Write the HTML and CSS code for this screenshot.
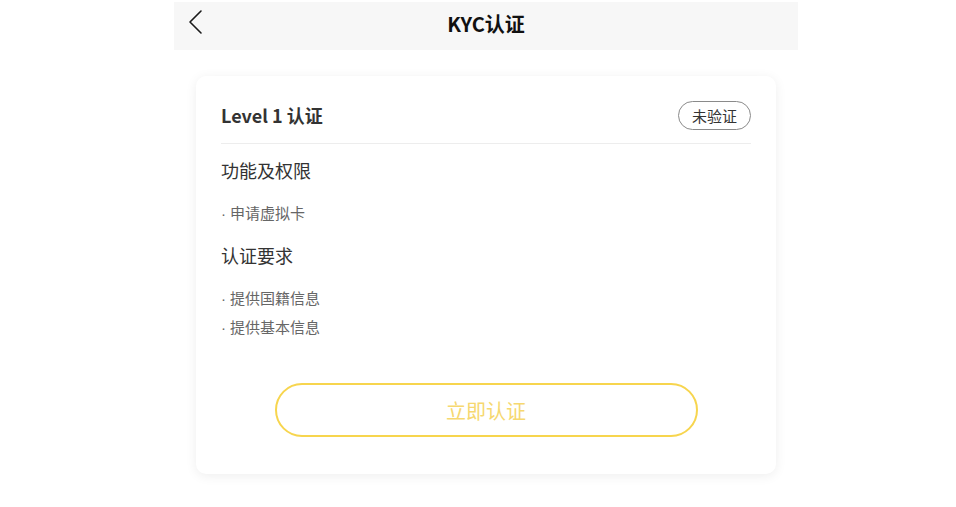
FILE: index.html
```html
<!DOCTYPE html>
<html lang="zh-CN">
<head>
<meta charset="utf-8">
<title>KYC认证</title>
<link rel="stylesheet" href="styles.css">
</head>
<body>
<div class="page">
  <header class="topbar">
    <button class="back" aria-label="返回">
      <svg width="16" height="26" viewBox="0 0 16 26"><polyline points="13,2 2,13 13,24" fill="none" stroke="#1a1a1a" stroke-width="1.6" stroke-linecap="round" stroke-linejoin="round"/></svg>
    </button>
    <h1 class="topbar-title">KYC认证</h1>
  </header>
  <main class="content">
    <section class="card">
      <div class="card-head">
        <h2 class="level">Level 1 认证</h2>
        <span class="badge">未验证</span>
      </div>
      <h3 class="sec sec-first">功能及权限</h3>
      <ul class="items">
        <li><span class="dot">·</span>申请虚拟卡</li>
      </ul>
      <h3 class="sec">认证要求</h3>
      <ul class="items">
        <li><span class="dot">·</span>提供国籍信息</li>
        <li><span class="dot">·</span>提供基本信息</li>
      </ul>
      <div class="actions">
        <button class="verify">立即认证</button>
      </div>
    </section>
  </main>
</div>
</body>
</html>
```

FILE: styles.css
```css
* { box-sizing: border-box; }
html, body { margin: 0; background: #fff; }
body {
  padding: 2px 0 0 16px;
  font-family: "Noto Sans CJK SC", "Noto Sans", sans-serif;
  color: #333;
}
.page { width: 624px; margin: 0 auto; }
.topbar {
  position: relative;
  height: 48px;
  background: #f7f7f7;
  display: flex;
  align-items: center;
  justify-content: center;
}
.back {
  position: absolute;
  left: 14px;
  top: 7px;
  padding: 0;
  border: 0;
  background: none;
  display: flex;
}
.topbar-title {
  margin: 0;
  font-size: 20px;
  font-weight: 700;
  color: #111;
  line-height: 26px;
  margin-top: -5px;
}
.content { padding: 26px 22px 30px; }
.card {
  background: #fff;
  border-radius: 10px;
  box-shadow: 0 2px 12px rgba(0,0,0,0.07);
  padding: 25px 25px 37px;
}
.card-head {
  display: flex;
  align-items: center;
  justify-content: space-between;
  padding-bottom: 13px;
  border-bottom: 1px solid #ededed;
}
.level {
  margin: 0;
  font-size: 18px;
  font-weight: 700;
  line-height: 29px;
  color: #333;
}
.badge {
  height: 29px;
  line-height: 27px;
  padding: 0 13px;
  border: 1px solid #8a8a8a;
  border-radius: 15px;
  font-size: 15px;
  color: #333;
}
.sec {
  margin: 19px 0 0;
  font-size: 18px;
  font-weight: 400;
  line-height: 26px;
  color: #333;
}
.sec-first { margin-top: 13px; }
.items {
  list-style: none;
  margin: 20px 0 0;
  padding: 0;
  display: flex;
  flex-direction: column;
  gap: 9px;
}
.items li {
  height: 20px;
  font-size: 15px;
  line-height: 20px;
  color: #666;
}
.dot {
  font-family: "Liberation Sans", sans-serif;
  line-height: 10px;
  margin-right: 4px;
}
.actions {
  display: flex;
  justify-content: center;
  margin-top: 46px;
}
.verify {
  width: 423px;
  height: 54px;
  border: 2px solid #f7d54e;
  border-radius: 27px;
  background: #fff;
  font-family: inherit;
  font-size: 20px;
  color: #f6d870;
}
```
